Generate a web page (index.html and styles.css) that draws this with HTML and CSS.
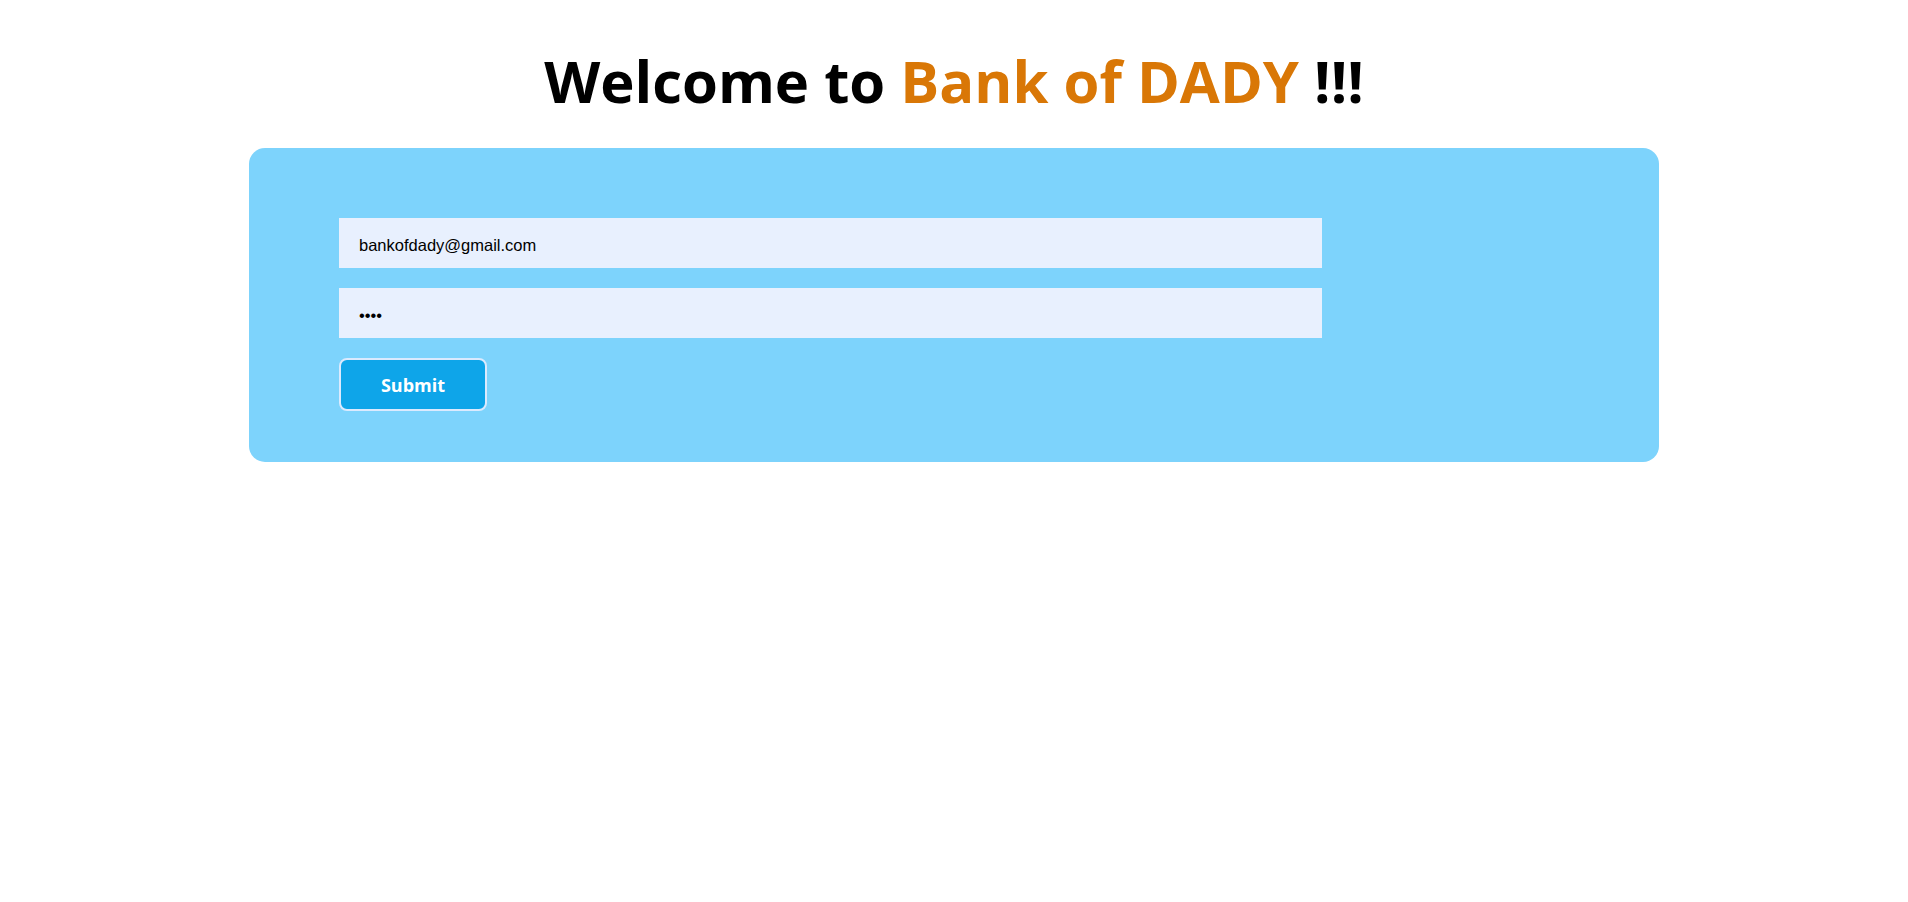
FILE: index.html
```html
<!DOCTYPE html>
<html lang="en">
<head>
<meta charset="utf-8">
<title>Bank of DADY</title>
<link rel="stylesheet" href="styles.css">
</head>
<body>
  <h1 class="title">Welcome to <span class="brand">Bank of DADY</span> !!!</h1>
  <main class="card">
    <form class="login-form">
      <input class="field" type="email" value="bankofdady@gmail.com">
      <input class="field field-password" type="password" value="1234">
      <button class="submit" type="button">Submit</button>
    </form>
  </main>
</body>
</html>
```
FILE: styles.css
```css
html, body {
  margin: 0;
  padding: 0;
  background: #ffffff;
}

body {
  font-family: "Open Sans", "Noto Sans", sans-serif;
}

.title {
  margin: 44px 0 30px;
  font-size: 58px;
  line-height: 74px;
  font-weight: 700;
  text-align: center;
  color: #000000;
}

.brand {
  color: #d97706;
}

.card {
  box-sizing: border-box;
  width: 1410px;
  margin: 0 auto;
  padding: 70px 90px 51px;
  background: #7dd3fc;
  border-radius: 16px;
}

.login-form {
  display: flex;
  flex-direction: column;
  align-items: flex-start;
  gap: 20px;
}

.field {
  box-sizing: border-box;
  width: 983px;
  height: 50px;
  padding: 5px 20px 0;
  border: none;
  outline: none;
  background: #e8f0fe;
  color: #000000;
  font-family: "Liberation Sans", Arial, sans-serif;
  font-size: 16.5px;
}

.submit {
  box-sizing: border-box;
  width: 148px;
  height: 53px;
  padding: 0;
  border: 2px solid #dbeafe;
  border-radius: 8px;
  background: #0ea5e9;
  color: #ffffff;
  font-family: "Open Sans", "Noto Sans", sans-serif;
  font-size: 18px;
  font-weight: 700;
  cursor: pointer;
}
```
